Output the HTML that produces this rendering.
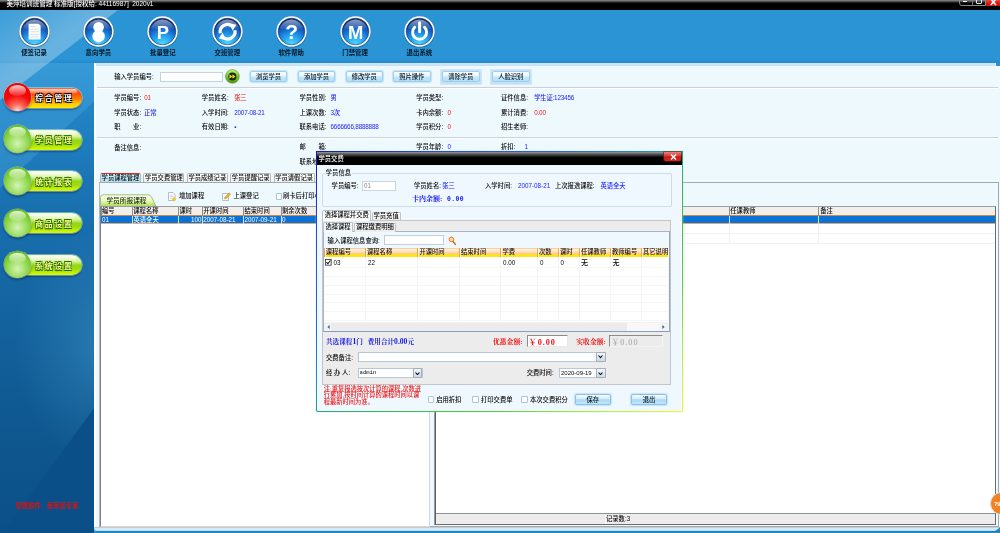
<!DOCTYPE html>
<html lang="zh">
<head>
<meta charset="utf-8">
<title>美萍培训班管理</title>
<style>
html,body{margin:0;padding:0;}
body{width:1000px;height:533px;overflow:hidden;position:relative;background:#2b94d4;
 font-family:"Liberation Sans","Noto Sans CJK SC",sans-serif;font-size:6.3px;color:#0a0a0a;line-height:8px;font-weight:500;}
.a{position:absolute;white-space:nowrap;}
.b{color:#1a1aff;}
.r{color:#f01818;}
/* title bar */
#tb{left:0;top:0;width:1000px;height:10px;background:linear-gradient(#909090 0,#5a5a5a 1.2px,#1a1a1a 2.6px,#000 3.6px,#000 100%);}
#tbt{left:6.5px;top:-.8px;color:#fff;font-size:6.6px;line-height:9px;letter-spacing:-.06px;}
/* toolbar */
#bar{left:0;top:10px;width:1000px;height:53px;background:linear-gradient(#2b94d4 0,#2b94d4 49px,#248bce 52.6px,#248bce 53px);}
.il{top:49.2px;width:60px;text-align:center;font-size:6.4px;color:#061626;font-weight:bold;}
/* sidebar */
.sb{left:3px;width:82px;height:29px;}
.sb .pill{position:absolute;left:12px;top:4.9px;width:67.4px;height:20px;border-radius:10px;box-shadow:0 0 0 .7px rgba(240,255,220,.55),0 1.5px 2px rgba(0,20,50,.6);}
.sb .pill:before{content:"";position:absolute;left:8px;right:5px;top:1px;height:5px;border-radius:5px;background:linear-gradient(rgba(255,255,255,.75),rgba(255,255,255,.1));}
.sb .ball{position:absolute;left:.7px;top:.7px;width:27.4px;height:27.4px;border-radius:50%;box-shadow:0 0 0 .6px rgba(255,255,255,.5),0 1.5px 2.5px rgba(0,20,50,.6);}
.sb .ball:before{content:"";position:absolute;left:5.2px;top:1.5px;width:17px;height:10.6px;border-radius:50%;background:linear-gradient(rgba(255,255,255,.8),rgba(255,255,255,.1));}
.sb .t{position:absolute;left:32.3px;top:11.2px;font-size:7.8px;font-weight:bold;letter-spacing:1.75px;line-height:10px;}
.sb.g .pill{background:linear-gradient(#eefbd2 0,#d6f39a 32%,#93d618 52%,#9ddc10 70%,#c6f200 90%,#d2f620 100%);}
.sb.g .ball{background:radial-gradient(circle at 50% 66%,#d4f4b4 0,#a4e06c 34%,#78cc2a 64%,#52b40e 100%);}
.sb.g .t{color:#f8ff8c;text-shadow:0 0 1px #2c6a00,.6px .6px 0 #2c6a00,-.6px -.6px 0 #2c6a00,.6px -.6px 0 #2c6a00,-.6px .6px 0 #2c6a00,0 .8px 0 #2c6a00;}
.sb.o .pill{background:linear-gradient(#ff6a3a 0,#ff4a00 30%,#ff8a00 58%,#ffcc00 80%,#ffe800 100%);}
.sb.o .ball{background:radial-gradient(circle at 50% 100%,#ffe0dc 0,#ff6a5a 22%,#f40808 52%,#e80000 100%);}
.sb.o .t{color:#fff;text-shadow:0 0 1px #000,.7px .7px 0 #000,-.7px -.7px 0 #000,.7px -.7px 0 #000,-.7px .7px 0 #000;}
/* main panel */
#main{left:93.6px;top:62.8px;width:906.4px;height:465px;background:#eef9fe;border-left:2px solid #fbfdff;box-sizing:border-box;}
#mainTop{left:95.6px;top:62.8px;width:899.2px;height:3.7px;background:linear-gradient(#cfe6f5,#c6e0f2);}
.hr{left:97.4px;width:901px;height:1px;background:#cdd1d4;border-bottom:1px solid #fff;}
.btn{height:11.2px;box-sizing:border-box;border:1px solid #a2cdea;border-radius:2px;background:linear-gradient(#fdfeff 0,#e6f5fd 42%,#c4e7fa 55%,#b2e1f8 100%);text-align:center;line-height:9.4px;font-size:6.3px;color:#0a1420;box-shadow:0 0 1px .4px rgba(190,225,245,.9);}
.inp{box-sizing:border-box;border:1px solid #c3d3df;background:#fff;}

.lab{font-size:6.3px;line-height:8px;}
.tab{top:173.4px;height:9.4px;box-sizing:border-box;border:1px solid #b4b8bc;border-bottom:none;border-radius:2px 2px 0 0;background:linear-gradient(#fff,#f1f1f1);text-align:center;font-size:6.3px;line-height:7.5px;}
.gh{background:#f1eeec;border-right:1px solid #8a8a8a;box-sizing:border-box;height:9.5px;line-height:9px;padding-left:1px;}
.cb{width:6.8px;height:6.8px;box-sizing:border-box;border:1px solid #a4c2da;background:#fff;border-radius:1px;}

.dtab{box-sizing:border-box;border:1px solid #bcc2c8;border-bottom:none;border-radius:1.5px 1.5px 0 0;text-align:center;font-size:6.3px;}
.oh{top:248.4px;height:8.8px;box-sizing:border-box;background:linear-gradient(#ffb468 0,#fff3e2 1.2px,#ffe4c4 3.4px,#ffc88a 5.8px,#ffe21e 6.4px,#ffe21e 100%);border-left:1px solid #ff9e3a;font-size:6.3px;line-height:8.6px;padding-left:1px;color:#181818;overflow:hidden;box-shadow:inset 1px 0 0 rgba(255,255,255,.8);}
.sf{font-family:"Liberation Serif","Noto Serif CJK SC",serif;font-weight:bold;}
.dd{width:9.3px;box-sizing:border-box;border:1px solid #9fb0c0;border-radius:1px;background:linear-gradient(#f4f6fa,#cfd8e6);}
.lw{display:inline-block;width:30.6px;}
.n{letter-spacing:-.18px;}
</style>
</head>
<body>
<div id="w" style="position:absolute;left:0;top:0;width:1000px;height:533px;will-change:transform;">
<!-- title -->
<div class="a" id="tb"></div>
<div class="a" id="tbt">美萍培训班管理 标准版[授权给: 44116987]&nbsp; 2020v1</div>
<div class="a" id="wc" style="left:958.6px;top:0;width:42px;height:7px;">
 <div class="a" style="left:0;top:-3px;width:27px;height:9.4px;border:.8px solid #8a8a8a;border-radius:0 0 0 3px;box-sizing:border-box;"></div>
 <div class="a" style="left:13.8px;top:0;width:.8px;height:5.8px;background:#7a7a7a;"></div>
 <div class="a" style="left:4.4px;top:.5px;width:4.4px;height:1.4px;background:#fff;"></div>
 <div class="a" style="left:17px;top:-2px;width:6.4px;height:6.2px;border:1px solid #e6e6e6;border-radius:0 0 1px 1px;box-sizing:border-box;"></div>
 <div class="a" style="left:27px;top:0;width:15px;height:5.8px;background:linear-gradient(#f0483c,#e01010 60%,#d81414);"></div>
 <svg class="a" style="left:31.6px;top:-1.4px" width="7" height="7" viewBox="0 0 7 7"><path d="M.8 0L6 6M6 0L.8 6" stroke="#fff" stroke-width="1.6"/></svg>
</div>
<!-- toolbar -->
<div class="a" id="bar"></div>
<svg class="a" style="left:0;top:62.6px" width="94" height="471" viewBox="0 62.6 94 471" preserveAspectRatio="none">
<defs><linearGradient id="sv" x1="0" y1="0" x2="0" y2="1"><stop offset="0" stop-color="#2b93d3"/><stop offset=".1" stop-color="#2283c5"/><stop offset=".3" stop-color="#1971b0"/><stop offset=".55" stop-color="#13629e"/><stop offset=".8" stop-color="#0e568e"/><stop offset="1" stop-color="#0c5088"/></linearGradient>
<linearGradient id="sa" x1="0" y1="0" x2="1" y2="0"><stop offset="0" stop-color="#4aa6dc" stop-opacity=".55"/><stop offset="1" stop-color="#3a9ad6" stop-opacity=".5"/></linearGradient>
<radialGradient id="sb2" gradientUnits="userSpaceOnUse" cx="104" cy="345" r="120" gradientTransform="translate(104 345) scale(.75 1) translate(-104 -345)"><stop offset="0" stop-color="#4aa0d0" stop-opacity=".42"/><stop offset=".5" stop-color="#4a9ccc" stop-opacity=".2"/><stop offset="1" stop-color="#4a9ccc" stop-opacity="0"/></radialGradient></defs>
<rect x="0" y="62.6" width="94" height="471" fill="url(#sv)"/>
<path d="M0 62.6H94V101L0 188z" fill="#4aa8e0" opacity=".36"/>

<path d="M0 62.6H94V408L0 535z" fill="url(#sb2)"/>
<path d="M94 408L2 533H94z" fill="#0b4f88"/>
</svg>
<svg class="a" style="left:0;top:10px" width="120" height="92" viewBox="0 10 120 92">
<defs><linearGradient id="hl" gradientUnits="userSpaceOnUse" x1="0" y1="10" x2="36" y2="57"><stop offset="0" stop-color="#fff" stop-opacity=".08"/><stop offset="1" stop-color="#fff" stop-opacity=".28"/></linearGradient></defs>
<path d="M0 10H118L0 100z" fill="url(#hl)"/></svg>
<svg width="0" height="0" style="position:absolute"><defs>
<radialGradient id="ib" cx=".5" cy="1.02" r=".95"><stop offset="0" stop-color="#5edcff"/><stop offset=".3" stop-color="#2eb2f4"/><stop offset=".55" stop-color="#1b82de"/><stop offset=".8" stop-color="#0e4cae"/><stop offset="1" stop-color="#07286a"/></radialGradient>
<linearGradient id="ig" x1="0" y1="0" x2="0" y2="1"><stop offset="0" stop-color="#fff" stop-opacity=".55"/><stop offset="1" stop-color="#fff" stop-opacity=".04"/></linearGradient>
</defs></svg>
<svg class="a" style="left:17.5px;top:14.7px" width="33" height="33" viewBox="-1 -1 33 33"><circle cx="15.5" cy="16" r="15.6" fill="#0a3a70" opacity=".55"/><circle cx="15.5" cy="15.5" r="15.2" fill="#fff"/><circle cx="15.5" cy="15.5" r="13.3" fill="url(#ib)" stroke="#0a2a66" stroke-width=".6"/><path d="M3.6 13.6a12 11.6 0 0 1 23.8 0q-12-3.4-23.8 0z" fill="url(#ig)"/><path d="M9.6 7.8h10l2 2v13.6h-12z" fill="#fff"/><path d="M11.4 10.6h5.4M11.4 13.2h8.4M11.4 15.8h8.4M11.4 18.4h8.4M11.4 21h8.4" stroke="#c3ccd6" stroke-width=".7"/></svg>
<div class="a il" style="left:4.0px">便签记录</div>
<svg class="a" style="left:81.9px;top:14.7px" width="33" height="33" viewBox="-1 -1 33 33"><circle cx="15.5" cy="16" r="15.6" fill="#0a3a70" opacity=".55"/><circle cx="15.5" cy="15.5" r="15.2" fill="#fff"/><circle cx="15.5" cy="15.5" r="13.3" fill="url(#ib)" stroke="#0a2a66" stroke-width=".6"/><path d="M3.6 13.6a12 11.6 0 0 1 23.8 0q-12-3.4-23.8 0z" fill="url(#ig)"/><circle cx="15.6" cy="11.2" r="5.3" fill="#fff"/><circle cx="15.6" cy="20.2" r="6.2" fill="#fff"/></svg>
<div class="a il" style="left:68.4px">意向学员</div>
<svg class="a" style="left:146.3px;top:14.7px" width="33" height="33" viewBox="-1 -1 33 33"><circle cx="15.5" cy="16" r="15.6" fill="#0a3a70" opacity=".55"/><circle cx="15.5" cy="15.5" r="15.2" fill="#fff"/><circle cx="15.5" cy="15.5" r="13.3" fill="url(#ib)" stroke="#0a2a66" stroke-width=".6"/><path d="M3.6 13.6a12 11.6 0 0 1 23.8 0q-12-3.4-23.8 0z" fill="url(#ig)"/><text x="15.8" y="22.6" font-size="18.4" font-family="Liberation Sans,sans-serif" font-weight="bold" fill="#fff" text-anchor="middle">P</text></svg>
<div class="a il" style="left:132.8px">批量登记</div>
<svg class="a" style="left:210.8px;top:14.7px" width="33" height="33" viewBox="-1 -1 33 33"><circle cx="15.5" cy="16" r="15.6" fill="#0a3a70" opacity=".55"/><circle cx="15.5" cy="15.5" r="15.2" fill="#fff"/><circle cx="15.5" cy="15.5" r="13.3" fill="url(#ib)" stroke="#0a2a66" stroke-width=".6"/><path d="M3.6 13.6a12 11.6 0 0 1 23.8 0q-12-3.4-23.8 0z" fill="url(#ig)"/><g fill="none" stroke="#fff" stroke-width="3.2"><path d="M8.3 17.2a7.3 7.3 0 0 1 11.6-7.2"/><path d="M22.9 14.2a7.3 7.3 0 0 1-11.6 7.2"/></g><path d="M17.2 7.2l7.2 1.6-3.8 6z" fill="#fff"/><path d="M14 24.2l-7.2-1.6 3.8-6z" fill="#fff"/></svg>
<div class="a il" style="left:197.3px">交班管理</div>
<svg class="a" style="left:274.7px;top:14.7px" width="33" height="33" viewBox="-1 -1 33 33"><circle cx="15.5" cy="16" r="15.6" fill="#0a3a70" opacity=".55"/><circle cx="15.5" cy="15.5" r="15.2" fill="#fff"/><circle cx="15.5" cy="15.5" r="13.3" fill="url(#ib)" stroke="#0a2a66" stroke-width=".6"/><path d="M3.6 13.6a12 11.6 0 0 1 23.8 0q-12-3.4-23.8 0z" fill="url(#ig)"/><text x="15.6" y="23.4" font-size="21" font-family="Liberation Sans,sans-serif" font-weight="bold" fill="#fff" text-anchor="middle">?</text></svg>
<div class="a il" style="left:261.2px">软件帮助</div>
<svg class="a" style="left:338.6px;top:14.7px" width="33" height="33" viewBox="-1 -1 33 33"><circle cx="15.5" cy="16" r="15.6" fill="#0a3a70" opacity=".55"/><circle cx="15.5" cy="15.5" r="15.2" fill="#fff"/><circle cx="15.5" cy="15.5" r="13.3" fill="url(#ib)" stroke="#0a2a66" stroke-width=".6"/><path d="M3.6 13.6a12 11.6 0 0 1 23.8 0q-12-3.4-23.8 0z" fill="url(#ig)"/><text x="15.6" y="22.6" font-size="18.4" font-family="Liberation Sans,sans-serif" font-weight="bold" fill="#fff" text-anchor="middle">M</text></svg>
<div class="a il" style="left:325.1px">门禁管理</div>
<svg class="a" style="left:402.9px;top:14.7px" width="33" height="33" viewBox="-1 -1 33 33"><circle cx="15.5" cy="16" r="15.6" fill="#0a3a70" opacity=".55"/><circle cx="15.5" cy="15.5" r="15.2" fill="#fff"/><circle cx="15.5" cy="15.5" r="13.3" fill="url(#ib)" stroke="#0a2a66" stroke-width=".6"/><path d="M3.6 13.6a12 11.6 0 0 1 23.8 0q-12-3.4-23.8 0z" fill="url(#ig)"/><path d="M10.7 11.3a7 7 0 1 0 9.8 0" fill="none" stroke="#fff" stroke-width="2.9" stroke-linecap="round"/><path d="M15.6 6.8v9" stroke="#fff" stroke-width="3" stroke-linecap="round"/></svg>
<div class="a il" style="left:389.4px">退出系统</div>
<!-- sidebar -->
<!-- main -->
<div class="a" id="main"></div>
<div class="a" id="mainTop"></div>
<div class="a" style="left:994.8px;top:62.8px;width:5.2px;height:3.7px;background:#2b90d1;border-left:1px solid #f4faff;box-sizing:border-box;"></div>

<div class="a sb o" style="top:82.8px"><div class="pill"></div><div class="ball"></div><div class="t">综合管理</div></div>
<div class="a sb g" style="top:124.7px"><div class="pill"></div><div class="ball"></div><div class="t">学员管理</div></div>
<div class="a sb g" style="top:166.6px"><div class="pill"></div><div class="ball"></div><div class="t">统计报表</div></div>
<div class="a sb g" style="top:208.5px"><div class="pill"></div><div class="ball"></div><div class="t">商品设置</div></div>
<div class="a sb g" style="top:250.4px"><div class="pill"></div><div class="ball"></div><div class="t">系统设置</div></div>
<div class="a" style="left:15.4px;top:502.2px;color:#e01010;font-size:6.25px;font-weight:bold;letter-spacing:.15px;">管理软件&nbsp;&nbsp; 美萍是专家</div>

<div class="a lab " style="left:114.2px;top:73px;">输入学员编号:</div>
<div class="a inp" style="left:160px;top:71.5px;width:62.5px;height:10.5px;"></div>
<svg class="a" style="left:224.6px;top:69.4px" width="15" height="15" viewBox="0 0 15 15"><defs><linearGradient id="gb" x1="0" y1="0" x2="0" y2="1"><stop offset="0" stop-color="#c8f078"/><stop offset=".5" stop-color="#7cc42c"/><stop offset="1" stop-color="#4a9a12"/></linearGradient></defs><circle cx="7.4" cy="7.4" r="6.9" fill="url(#gb)" stroke="#4a861a" stroke-width=".5"/><circle cx="7.4" cy="7.5" r="4" fill="#18260a"/><path d="M4.4 5.3l2.9 2.2-2.9 2.2zM7.4 5.3l3.1 2.2-3.1 2.2z" fill="#ece02c"/></svg>
<div class="a btn" style="left:250px;top:71.3px;width:37px;">浏览学员</div>
<div class="a btn" style="left:298px;top:71.3px;width:37px;">添加学员</div>
<div class="a btn" style="left:345.5px;top:71.3px;width:37.5px;">修改学员</div>
<div class="a btn" style="left:393px;top:71.3px;width:37.5px;">照片操作</div>
<div class="a" style="left:440px;top:69px;width:41.5px;height:15.5px;background:linear-gradient(#deeef8,#c2e4f6);border:1px solid #d4e6f2;box-sizing:border-box;border-radius:1px;"></div>
<div class="a btn" style="left:442px;top:71.3px;width:37.5px;">清除学员</div>
<div class="a" style="left:490px;top:69px;width:41.5px;height:15.5px;background:linear-gradient(#deeef8,#c2e4f6);border:1px solid #d4e6f2;box-sizing:border-box;border-radius:1px;"></div>
<div class="a btn" style="left:492px;top:71.3px;width:37.5px;">人脸识别</div>
<div class="a hr" style="top:87px"></div>
<div class="a hr" style="top:136.5px"></div>
<div class="a lab " style="left:114.2px;top:93.8px;"><span class="lw" style="width:30px">学员编号:</span><span class="r n">01</span></div>
<div class="a lab " style="left:114.2px;top:108.5px;"><span class="lw" style="width:30px">学员状态:</span><span class="b n">正常</span></div>
<div class="a lab " style="left:114.2px;top:122.6px;">职&emsp;&emsp;业:</div>
<div class="a lab " style="left:201.8px;top:93.8px;"><span class="lw" style="width:32.4px">学员姓名:</span><span class="r n">张三</span></div>
<div class="a lab " style="left:201.8px;top:108.5px;"><span class="lw" style="width:32.4px">入学时间:</span><span class="b n">2007-08-21</span></div>
<div class="a lab " style="left:201.8px;top:122.6px;"><span class="lw" style="width:32.4px">有效日期:</span><span class="b n">▪</span></div>
<div class="a lab " style="left:299.5px;top:93.8px;"><span class="lw" style="width:31px">学员性别:</span><span class="b n">男</span></div>
<div class="a lab " style="left:299.5px;top:108.5px;"><span class="lw" style="width:31px">上课次数:</span><span class="b n">3次</span></div>
<div class="a lab " style="left:299.5px;top:122.6px;"><span class="lw" style="width:31px">联系电话:</span><span class="b n">6666666,8888888</span></div>
<div class="a lab " style="left:416.2px;top:93.8px;">学员类型:</div>
<div class="a lab " style="left:416.2px;top:108.5px;"><span class="lw" style="width:31.3px">卡内余额:</span><span class="r n">0</span></div>
<div class="a lab " style="left:416.2px;top:122.6px;"><span class="lw" style="width:31.3px">学员积分:</span><span class="r n">0</span></div>
<div class="a lab " style="left:501px;top:93.8px;"><span class="lw" style="width:33.2px">证件信息:</span><span class="b n">学生证:123456</span></div>
<div class="a lab " style="left:501px;top:108.5px;"><span class="lw" style="width:33.2px">累计消费:</span><span class="r n">0.00</span></div>
<div class="a lab " style="left:501px;top:122.6px;">招生老师:</div>
<div class="a lab " style="left:114.2px;top:143.5px;">备注信息:</div>
<div class="a lab " style="left:299.5px;top:143.2px;">邮&emsp;&emsp;箱:</div>
<div class="a lab " style="left:416.2px;top:143.2px;"><span class="lw" style="width:31.3px">学员年龄:</span><span class="b n">0</span></div>
<div class="a lab " style="left:501px;top:143.2px;"><span class="lw" style="width:23.6px">折扣:</span><span class="b n">1</span></div>
<div class="a lab " style="left:299.5px;top:158px;">联系地址:</div>
<div class="a tab" style="left:100.0px;width:41px;top:173.5px;height:10px;border-top:1.5px solid #e8282a;background:linear-gradient(#d2effc,#aee1f8);top:173px;height:10.4px;">学员课程管理</div>
<div class="a tab" style="left:143.4px;width:41px;">学员交费管理</div>
<div class="a tab" style="left:186.8px;width:41px;">学员成绩记录</div>
<div class="a tab" style="left:230.2px;width:41px;">学员提醒记录</div>
<div class="a tab" style="left:273.6px;width:41px;">学员请假记录</div>
<div class="a tab" style="left:317.0px;width:41px;">学员消费记录</div>
<div class="a tab" style="left:360.4px;width:41px;">学员积分记录</div>
<div class="a tab" style="left:403.8px;width:41px;">学员充值记录</div>
<div class="a" style="left:98.6px;top:182.3px;width:900px;height:344.6px;box-sizing:border-box;border:1px solid #a4a8ac;border-left-color:#b4b8bc;background:#eef9fe;"></div>
<svg class="a" style="left:99.5px;top:194px" width="57" height="13" viewBox="0 0 57 13"><defs><linearGradient id="gt" x1="0" y1="0" x2="0" y2="1"><stop offset="0" stop-color="#fbfff0"/><stop offset=".55" stop-color="#e6f7b8"/><stop offset="1" stop-color="#a8dc50"/></linearGradient></defs><path d="M.5 12.5V3.5Q.5 .8 3.2 .8H48Q50.5 .8 51.5 3L56 12.5z" fill="url(#gt)" stroke="#8fae58" stroke-width=".8"/></svg>
<div class="a lab " style="left:106.4px;top:196.6px;font-size:6.7px;color:#1c2c0c;">学员所报课程</div>
<svg class="a" style="left:168px;top:191.5px" width="8" height="9" viewBox="0 0 8 9"><path d="M.5 .5h4.5l2 2v6H.5z" fill="#fff" stroke="#9aa4ae" stroke-width=".7"/><path d="M1.8 3h3M1.8 4.6h3.6M1.8 6.2h2" stroke="#9ab" stroke-width=".5"/><circle cx="6" cy="7" r="1.8" fill="#f2c81e"/></svg>
<div class="a lab " style="left:179px;top:192px;">增加课程</div>
<svg class="a" style="left:222px;top:191.5px" width="9" height="9" viewBox="0 0 9 9"><path d="M.5 1.5h6v7h-6z" fill="#fff" stroke="#9aa4ae" stroke-width=".7"/><path d="M2.5 7l.6-2 4-4.2 1.4 1.4-4 4.2z" fill="#f0b428" stroke="#a8701a" stroke-width=".4"/></svg>
<div class="a lab " style="left:233.5px;top:192px;">上课登记</div>
<div class="a cb" style="left:275.5px;top:192.8px"></div>
<div class="a lab " style="left:283px;top:192px;">刷卡后打印小票</div>
<div class="a" style="left:100px;top:205.8px;width:330px;height:320.8px;box-sizing:border-box;border:1px solid #d4d6d8;border-left-color:#808488;border-top-color:#9a9ea2;background:#fff;"></div>
<div class="a" style="left:100.5px;top:206.5px;width:328.5px;height:9.5px;background:#f1eeec;border-bottom:1px solid #c98a4a;box-sizing:border-box;"></div>
<div class="a" style="left:100.5px;top:206.5px;width:1px;height:17.5px;background:#8a8f94;"></div>
<div class="a" style="left:131.8px;top:206.5px;width:1px;height:17.5px;background:#8a8f94;"></div>
<div class="a" style="left:178px;top:206.5px;width:1px;height:17.5px;background:#8a8f94;"></div>
<div class="a" style="left:201.8px;top:206.5px;width:1px;height:17.5px;background:#8a8f94;"></div>
<div class="a" style="left:243px;top:206.5px;width:1px;height:17.5px;background:#8a8f94;"></div>
<div class="a" style="left:280.5px;top:206.5px;width:1px;height:17.5px;background:#8a8f94;"></div>
<div class="a" style="left:101px;top:216.2px;width:328px;height:7.8px;background:#0b73d8;border-bottom:.6px solid #e8a868;box-sizing:border-box;"></div>
<div class="a lab " style="left:102.0px;top:207.2px;">编号</div>
<div class="a lab " style="left:133.3px;top:207.2px;">课程名称</div>
<div class="a lab " style="left:179.5px;top:207.2px;">课时</div>
<div class="a lab " style="left:203.3px;top:207.2px;">开课时间</div>
<div class="a lab " style="left:244.5px;top:207.2px;">结束时间</div>
<div class="a lab " style="left:282.0px;top:207.2px;">剩余次数</div>
<div class="a" style="left:131.8px;top:216.2px;width:1px;height:7.5px;background:#cfe2f6;"></div>
<div class="a" style="left:178px;top:216.2px;width:1px;height:7.5px;background:#cfe2f6;"></div>
<div class="a" style="left:201.8px;top:216.2px;width:1px;height:7.5px;background:#cfe2f6;"></div>
<div class="a" style="left:243px;top:216.2px;width:1px;height:7.5px;background:#cfe2f6;"></div>
<div class="a" style="left:280.5px;top:216.2px;width:1px;height:7.5px;background:#cfe2f6;"></div>
<div class="a lab " style="left:102px;top:216.2px;color:#fff;">01</div>
<div class="a lab " style="left:133.5px;top:216.2px;color:#fff;">英语全天</div>
<div class="a lab " style="left:180px;top:216.2px;color:#fff;width:21.5px;text-align:right;">100</div>
<div class="a lab " style="left:203.3px;top:216.2px;color:#fff;">2007-08-21</div>
<div class="a lab " style="left:244.5px;top:216.2px;color:#fff;">2007-09-21</div>
<div class="a lab " style="left:282px;top:216.2px;color:#fff;">0</div>
<div class="a" style="left:434px;top:205.6px;width:561.8px;height:319.4px;box-sizing:border-box;border:1px solid #6a6e72;border-left-color:#9a9ea2;border-top-color:#9a9ea2;background:#fff;box-shadow:inset 1px 1px 0 #5a5e62;"></div>
<div class="a" style="left:435.5px;top:206.5px;width:559.5px;height:9.5px;background:#f1eeec;border-bottom:1px solid #c98a4a;box-sizing:border-box;"></div>
<div class="a" style="left:435.5px;top:216.2px;width:559.5px;height:7.8px;background:#0b73d8;border-bottom:.6px solid #e8a868;box-sizing:border-box;"></div>
<div class="a" style="left:728.5px;top:206.5px;width:1px;height:9.5px;background:#8a8f94;"></div>
<div class="a" style="left:728.5px;top:216.2px;width:1px;height:7.5px;background:#cfe2f6;"></div>
<div class="a" style="left:728.5px;top:224px;width:1px;height:18.5px;background:#eef0f2;"></div>
<div class="a lab " style="left:730.3px;top:207.2px;">任课教师</div>
<div class="a" style="left:818.4px;top:206.5px;width:1px;height:9.5px;background:#8a8f94;"></div>
<div class="a" style="left:818.4px;top:216.2px;width:1px;height:7.5px;background:#cfe2f6;"></div>
<div class="a" style="left:818.4px;top:224px;width:1px;height:18.5px;background:#eef0f2;"></div>
<div class="a lab " style="left:820.1999999999999px;top:207.2px;">备注</div>
<div class="a" style="left:435.5px;top:233px;width:559.5px;height:1px;background:#eef0f2;"></div>
<div class="a" style="left:435.5px;top:242.5px;width:559.5px;height:1px;background:#eef0f2;"></div>
<div class="a" style="left:436px;top:513.2px;width:558.8px;height:11px;background:#ececec;border-top:1px solid #8e9296;box-sizing:border-box;"></div>
<div class="a" style="left:604.5px;top:514.5px;width:1px;height:9px;background:#fff;"></div>
<div class="a lab " style="left:606px;top:515.2px;">记录数:3</div>
<div class="a" style="left:94px;top:527px;width:906px;height:3.8px;background:linear-gradient(#d9edf9,#c4e2f5);border-top:.6px solid #c8ccd0;box-sizing:border-box;border-radius:0 0 0 3px;"></div>
<svg class="a" style="left:988px;top:527px" width="12" height="6" viewBox="0 0 12 6"><path d="M12 0V6H0Q8 5 12 0z" fill="#2486c8"/></svg>
<div class="a" style="left:96px;top:530.8px;width:904px;height:2.2px;background:linear-gradient(#1a78b8,#2b8fd0);"></div>
<div class="a" style="left:990.4px;top:492.2px;width:22.6px;height:22.6px;border-radius:50%;background:#f58220;border:1px solid #d6e6f2;box-sizing:border-box;"></div>
<div class="a" style="left:994.2px;top:499.6px;color:#fff;font-weight:bold;font-size:5.6px;">79</div>

<div class="a" style="left:316px;top:151.2px;width:367px;height:261px;border-radius:0 0 2px 2px;background:linear-gradient(to bottom right,#1a1a9c 0,#2846d0 15%,#3066d2 34%,#2e88b0 44%,#2ca47c 50%,#3cba50 60%,#62c844 75%,#b8ea3c 88%,#f6f62c 100%);box-shadow:0 0 1.5px rgba(160,225,235,.9);"></div>
<div class="a" style="left:317.3px;top:152px;width:364.4px;height:259.2px;background:#eef8fe;border-radius:0 0 1.5px 1.5px;box-shadow:inset -1px 0 0 #fff;"></div>
<div class="a" style="left:317.3px;top:152px;width:364.4px;height:13px;background:linear-gradient(#9a9a9a 0,#5a5a5a 2px,#000 5.5px,#000 100%);"></div>
<div class="a" style="left:318.5px;top:154.5px;color:#dedede;font-size:6.3px;font-weight:bold;">学员交费</div>
<div class="a" style="left:664px;top:152.4px;width:17.2px;height:8.4px;border-radius:0 0 2px 2px;background:linear-gradient(#e8807a 0,#d83a30 45%,#c81a14 55%,#d62a20 100%);box-shadow:0 0 0 .6px #7a1a14;"></div>
<svg class="a" style="left:669.5px;top:153.5px" width="7" height="6" viewBox="0 0 7 6"><path d="M1 .5L6 5.5M6 .5L1 5.5" stroke="#fff" stroke-width="1.5"/></svg>
<div class="a" style="left:322.4px;top:173px;width:349.5px;height:33.5px;box-sizing:border-box;border:1px solid #cbdde9;border-radius:2px;"></div>
<div class="a lab" style="left:324.8px;top:169px;background:#eef8fe;padding:0 1px;">学员信息</div>
<div class="a lab " style="left:331.6px;top:182px;">学员编号:</div>
<div class="a inp" style="left:362.3px;top:181px;width:33.5px;height:9.5px;border-color:#c9d6e0;"></div>
<div class="a lab " style="left:364px;top:182px;color:#8a8a8a;">01</div>
<div class="a lab " style="left:414px;top:182px;">学员姓名:<span class="b">&thinsp;张三</span></div>
<div class="a lab " style="left:485px;top:182px;">入学时间:</div>
<div class="a lab b" style="left:518px;top:182px;">2007-08-21</div>
<div class="a lab " style="left:555px;top:182px;">上次报选课程:</div>
<div class="a lab b" style="left:600.4px;top:182px;">英语全天</div>
<div class="a lab sf" style="left:412px;top:194.6px;color:#1010f0;font-size:7px;letter-spacing:0;">卡内余额:</div>
<div class="a lab sf" style="left:447.2px;top:194.7px;color:#1010f0;font-size:7.4px;letter-spacing:.55px;font-family:'Liberation Mono',monospace;transform:scaleX(.86);transform-origin:0 0;">0.00</div>
<div class="a" style="left:322.4px;top:220.2px;width:349px;height:164.4px;box-sizing:border-box;border:1px solid #c2c6ca;background:#ececec;"></div>
<div class="a dtab" style="left:322.4px;top:210px;width:48.6px;height:11px;background:#fbfdfe;line-height:8.4px;">选择课程并交费</div>
<div class="a dtab" style="left:371.6px;top:211.6px;width:29px;height:8.8px;background:linear-gradient(#fdfdfd,#ededed);line-height:6.6px;">学员充值</div>
<div class="a" style="left:323px;top:231.4px;width:346.8px;height:100.6px;box-sizing:border-box;border:1px solid #a8b4c2;border-right:1.6px solid #9aa6b4;border-bottom-color:#8a9cc0;background:#eef8fe;"></div>
<div class="a dtab" style="left:323px;top:222px;width:30px;height:10.2px;background:#f4fafe;line-height:8.6px;">选择课程</div>
<div class="a dtab" style="left:353.6px;top:223.4px;width:42.6px;height:8.2px;background:linear-gradient(#fdfdfd,#ededed);line-height:6.8px;">课程缴费明细</div>
<div class="a lab " style="left:327.6px;top:236.6px;">输入课程信息查询:</div>
<div class="a inp" style="left:383.6px;top:235.4px;width:60px;height:9.8px;border-color:#c0cfdb;"></div>
<svg class="a" style="left:447.5px;top:235.5px" width="9" height="10" viewBox="0 0 9 10"><path d="M4.8 5.2l2.6 3.2" stroke="#c8641a" stroke-width="1.4" stroke-linecap="round"/><circle cx="3.4" cy="3.4" r="2.3" fill="#ffd49a" stroke="#e87a1e" stroke-width="1"/></svg>
<div class="a" style="left:323.8px;top:248.6px;width:344px;height:73.8px;background:#fff;"></div>
<div class="a oh" style="left:323.8px;width:41.19999999999999px;">课程编号</div>
<div class="a oh" style="left:365px;width:52.39999999999998px;">课程名称</div>
<div class="a" style="left:364.5px;top:257.2px;width:1px;height:65px;background:#f4f5f6;"></div>
<div class="a oh" style="left:417.4px;width:41.60000000000002px;">开课时间</div>
<div class="a" style="left:416.9px;top:257.2px;width:1px;height:65px;background:#f4f5f6;"></div>
<div class="a oh" style="left:459px;width:41.39999999999998px;">结束时间</div>
<div class="a" style="left:458.5px;top:257.2px;width:1px;height:65px;background:#f4f5f6;"></div>
<div class="a oh" style="left:500.4px;width:36.60000000000002px;">学费</div>
<div class="a" style="left:499.9px;top:257.2px;width:1px;height:65px;background:#f4f5f6;"></div>
<div class="a oh" style="left:537px;width:21px;">次数</div>
<div class="a" style="left:536.5px;top:257.2px;width:1px;height:65px;background:#f4f5f6;"></div>
<div class="a oh" style="left:558px;width:21px;">课时</div>
<div class="a" style="left:557.5px;top:257.2px;width:1px;height:65px;background:#f4f5f6;"></div>
<div class="a oh" style="left:579px;width:31px;">任课教师</div>
<div class="a" style="left:578.5px;top:257.2px;width:1px;height:65px;background:#f4f5f6;"></div>
<div class="a oh" style="left:610px;width:31px;">教师编号</div>
<div class="a" style="left:609.5px;top:257.2px;width:1px;height:65px;background:#f4f5f6;"></div>
<div class="a oh" style="left:641px;width:26.799999999999955px;">其它说明</div>
<div class="a" style="left:640.5px;top:257.2px;width:1px;height:65px;background:#f4f5f6;"></div>
<div class="a" style="left:323.8px;top:267.0px;width:344px;height:1px;background:#f5f6f7;"></div>
<div class="a" style="left:323.8px;top:275.8px;width:344px;height:1px;background:#f5f6f7;"></div>
<div class="a" style="left:323.8px;top:284.7px;width:344px;height:1px;background:#f5f6f7;"></div>
<div class="a" style="left:323.8px;top:293.5px;width:344px;height:1px;background:#f5f6f7;"></div>
<div class="a" style="left:323.8px;top:302.4px;width:344px;height:1px;background:#f5f6f7;"></div>
<div class="a" style="left:323.8px;top:311.2px;width:344px;height:1px;background:#f5f6f7;"></div>
<div class="a" style="left:323.8px;top:320.1px;width:344px;height:1px;background:#f5f6f7;"></div>
<svg class="a" style="left:325.4px;top:259.4px" width="6.6" height="6.6" viewBox="0 0 6.4 6.4"><rect x=".4" y=".4" width="5.6" height="5.6" fill="#fff" stroke="#333" stroke-width=".8"/><path d="M1.4 3.1l1.4 1.5L5.2 1.4" fill="none" stroke="#111" stroke-width="1"/></svg>
<div class="a lab " style="left:333.6px;top:259px;">03</div>
<div class="a lab " style="left:368px;top:259px;">22</div>
<div class="a lab " style="left:503px;top:259px;">0.00</div>
<div class="a lab " style="left:540px;top:259px;">0</div>
<div class="a lab " style="left:560.4px;top:259px;">0</div>
<div class="a lab " style="left:581px;top:259px;font-size:7px;">无</div>
<div class="a lab " style="left:612.4px;top:259px;font-size:7px;">无</div>
<div class="a" style="left:323.8px;top:322.4px;width:344px;height:8.6px;background:#f2f2f2;"></div>
<div class="a" style="left:331px;top:322.8px;width:296px;height:7.8px;background:#ebebeb;"></div>
<div class="a" style="left:627px;top:322.8px;width:33px;height:7.8px;background:#f8f8f8;"></div>
<svg class="a" style="left:326.6px;top:324.6px" width="3" height="4" viewBox="0 0 3 4"><path d="M2.6 0L.4 2 2.6 4z" fill="#3a5fa8"/></svg>
<svg class="a" style="left:662px;top:324.6px" width="3" height="4" viewBox="0 0 3 4"><path d="M.4 0L2.6 2 .4 4z" fill="#3a5fa8"/></svg>
<div class="a lab sf" style="left:326px;top:338px;color:#1414e0;font-size:6.6px;">共选课程<span style="font-size:7.6px">1</span>门&nbsp;&nbsp; 费用合计<span style="font-size:7.6px">0.00</span>元</div>
<div class="a lab sf" style="left:493px;top:337.6px;color:#f01010;font-size:6.8px;">优惠金额:</div>
<div class="a" style="left:526.6px;top:335.2px;width:41.6px;height:12px;box-sizing:border-box;background:#fff;border:1px solid #8c8c8c;border-right-color:#e8e8e8;border-bottom-color:#e8e8e8;"></div>
<div class="a lab sf" style="left:528.6px;top:338.6px;color:#f01010;font-size:8.2px;letter-spacing:.95px;">￥0.00</div>
<div class="a lab sf" style="left:576.3px;top:337.6px;color:#f01010;font-size:6.8px;">实收金额:</div>
<div class="a" style="left:609.3px;top:335.2px;width:54.2px;height:12px;box-sizing:border-box;background:#ececec;border:1px solid #8c8c8c;border-right-color:#f4f4f4;border-bottom-color:#f4f4f4;"></div>
<div class="a lab " style="left:611.2px;top:338.6px;color:#a2a2a2;font-size:8.2px;letter-spacing:.95px;font-family:'Liberation Serif','Noto Serif CJK SC',serif;">￥0.00</div>
<div class="a lab " style="left:326px;top:353.5px;">交费备注:</div>
<div class="a inp" style="left:357.8px;top:352.2px;width:248px;height:9.6px;border-color:#b8c8d6;"></div>
<div class="a dd" style="left:596.3px;top:352.4px;height:9.2px;"></div>
<div class="a lab " style="left:326px;top:369px;">经 办 人:</div>
<div class="a inp" style="left:357.8px;top:368.2px;width:64.8px;height:9.8px;border-color:#b8c8d6;"></div>
<div class="a dd" style="left:413px;top:368.4px;height:9.4px;"></div>
<div class="a lab " style="left:359.6px;top:369px;font-family:'Liberation Mono',monospace;font-size:5.6px;">admin</div>
<div class="a lab " style="left:526.7px;top:369px;">交费时间:</div>
<div class="a inp" style="left:559px;top:368.2px;width:46.8px;height:9.8px;border-color:#b8c8d6;"></div>
<div class="a dd" style="left:596.3px;top:368.4px;height:9.4px;"></div>
<div class="a lab " style="left:561px;top:369px;font-size:6px;">2020-09-19</div>
<svg class="a" style="left:598.4px;top:355.4px" width="5" height="3.4" viewBox="0 0 5 3.4"><path d="M.5 .5L2.5 2.7 4.5 .5" fill="none" stroke="#111" stroke-width="1.1"/></svg>
<svg class="a" style="left:415.1px;top:371.6px" width="5" height="3.4" viewBox="0 0 5 3.4"><path d="M.5 .5L2.5 2.7 4.5 .5" fill="none" stroke="#111" stroke-width="1.1"/></svg>
<svg class="a" style="left:598.4px;top:371.6px" width="5" height="3.4" viewBox="0 0 5 3.4"><path d="M.5 .5L2.5 2.7 4.5 .5" fill="none" stroke="#111" stroke-width="1.1"/></svg>
<div class="a" style="left:323.8px;top:385.6px;width:102px;color:#f01818;font-size:6.25px;line-height:6.65px;white-space:nowrap;">注:重复报选按次计算的课程,次数进<br>行累加,按时间计算的课程时间以课<br>程最新时间为准。</div>
<div class="a cb" style="left:427.6px;top:396.3px;border-color:#aac4da;"></div>
<div class="a lab " style="left:436.20000000000005px;top:395.8px;">启用折扣</div>
<div class="a cb" style="left:472.4px;top:396.3px;border-color:#aac4da;"></div>
<div class="a lab " style="left:481.0px;top:395.8px;">打印交费单</div>
<div class="a cb" style="left:521.4px;top:396.3px;border-color:#aac4da;"></div>
<div class="a lab " style="left:530.0px;top:395.8px;">本次交费积分</div>
<div class="a btn" style="left:574.6px;top:393.6px;width:36.2px;height:11.6px;line-height:9.6px;border-color:#8cc0e4;background:linear-gradient(#f4fbff 0,#d4ecfb 45%,#a8d8f6 52%,#c4e6fa 100%);">保存</div>
<div class="a btn" style="left:631px;top:393.6px;width:36.2px;height:11.6px;line-height:9.6px;border-color:#8cc0e4;background:linear-gradient(#f4fbff 0,#d4ecfb 45%,#a8d8f6 52%,#c4e6fa 100%);">退出</div>

</div>
</body>
</html>
